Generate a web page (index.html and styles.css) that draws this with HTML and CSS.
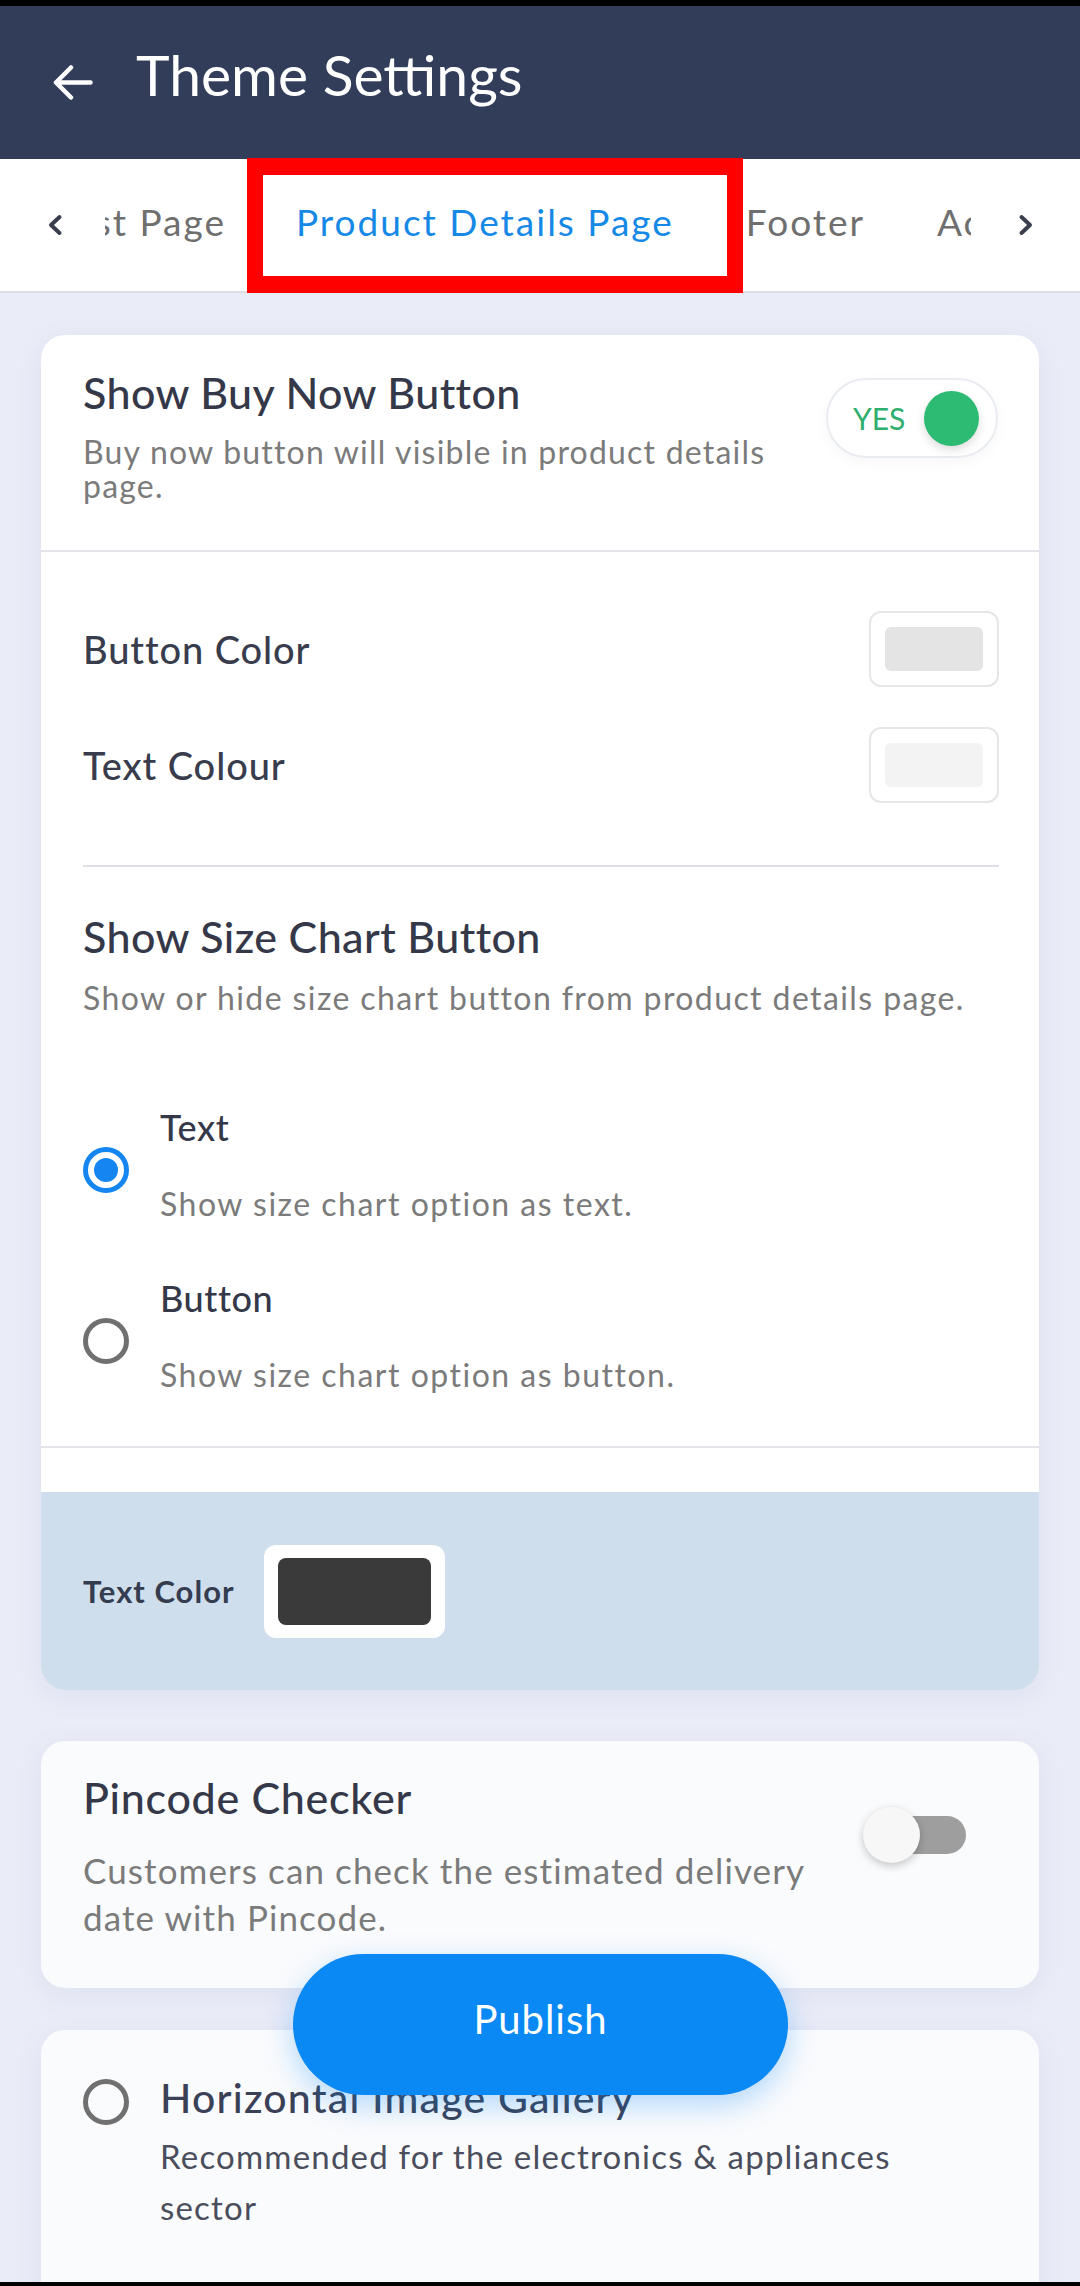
FILE: index.html
```html
<!DOCTYPE html>
<html lang="en">
<head>
  <meta charset="UTF-8">
  <title>Theme Settings</title>
  <meta name="viewport" content="width=device-width, initial-scale=1.0">
  <link rel="stylesheet" href="styles.css">
</head>
<body>
  <div class="screen">
    <header class="appbar">
      <svg class="back" viewBox="0 0 40 35" width="40" height="35">
        <path d="M37.5 17.5H3.5M18 2.5L3 17.5L18 32.5" fill="none" stroke="#fff" stroke-width="4.5" stroke-linecap="round" stroke-linejoin="round"/>
      </svg>
      <h1>Theme Settings</h1>
    </header>

    <nav class="tabs">
      <svg class="chev" viewBox="0 0 16 22" width="16" height="22">
        <path d="M12.5 3L4 11l8.5 8" fill="none" stroke="#3a3e4d" stroke-width="4" stroke-linecap="round" stroke-linejoin="round"/>
      </svg>
      <div class="tab-view">
        <div class="tab-track">
          <a class="tab tab-prev">Product List Page</a>
          <a class="tab active">Product Details Page</a>
          <a class="tab">Footer</a>
          <a class="tab">Account</a>
        </div>
      </div>
      <svg class="chev" viewBox="0 0 16 22" width="16" height="22">
        <path d="M3.5 3L12 11l-8.5 8" fill="none" stroke="#3a3e4d" stroke-width="4" stroke-linecap="round" stroke-linejoin="round"/>
      </svg>
      <div class="mark"></div>
    </nav>

    <main class="content">
      <section class="card card-main">
        <div class="setting setting-top">
          <div class="setting-text">
            <h2>Show Buy Now Button</h2>
            <p class="desc desc-buy">Buy now button will visible in product details page.</p>
          </div>
          <div class="switch-on"><span>YES</span><i></i></div>
        </div>

        <div class="options">
          <div class="color-row">
            <span>Button Color</span>
            <div class="swatch"><i class="sw-grey"></i></div>
          </div>
          <div class="color-row">
            <span>Text Colour</span>
            <div class="swatch"><i class="sw-light"></i></div>
          </div>
          <div class="rule"></div>

          <h2 class="size-title">Show Size Chart Button</h2>
          <p class="desc size-desc">Show or hide size chart button from product details page.</p>

          <label class="option first">
            <span class="radio checked"></span>
            <span class="option-text">
              <b>Text</b>
              <em>Show size chart option as text.</em>
            </span>
          </label>
          <label class="option">
            <span class="radio"></span>
            <span class="option-text">
              <b>Button</b>
              <em>Show size chart option as button.</em>
            </span>
          </label>
        </div>

        <div class="card-gap"></div>

        <div class="text-color">
          <span>Text Color</span>
          <div class="swatch-dark"><i></i></div>
        </div>
      </section>

      <section class="card card-soft card-pin">
        <div class="setting-text">
          <h2>Pincode Checker</h2>
          <p class="desc desc-pin">Customers can check the estimated delivery date with Pincode.</p>
        </div>
        <div class="switch-off"><span class="track"></span><span class="knob"></span></div>
      </section>

      <section class="card card-soft card-gallery">
        <span class="radio"></span>
        <div class="gallery-text">
          <h3>Horizontal Image Gallery</h3>
          <p>Recommended for the electronics &amp; appliances sector</p>
        </div>
      </section>
    </main>

    <button class="publish" type="button">Publish</button>
  </div>
</body>
</html>
```

FILE: styles.css
```css
*{box-sizing:border-box;margin:0;padding:0;}
body{background:#000;font-family:Lato,"Noto Sans",sans-serif;}
.screen{
  width:1080px;
  height:2286px;
  overflow:hidden;
  position:relative;
  border-top:6px solid #000;
  border-bottom:4px solid #000;
  background:#eaecf7;
}

/* app bar */
.appbar{
  height:153px;
  background:#323d59;
  display:flex;
  align-items:center;
  padding:0 0 18px 53px;
}
.back{margin-top:18px;flex:none;}
.appbar h1{
  margin-left:43px;
  font-size:57px;
  line-height:68px;
  font-weight:400;
  color:#fff;
}

/* tabs */
.tabs{
  position:relative;
  height:134px;
  background:#fff;
  border-bottom:2px solid #dcdee4;
  display:flex;
  align-items:center;
  padding:0 46px 8px 47px;
}
.chev{flex:none;margin-top:8px;}
.tab-view{
  flex:1;
  overflow:hidden;
  margin:0 47px 0 42px;
}
.tab-track{display:flex;}
.tab{
  flex:none;
  padding:0 36px;
  font-size:37px;
  line-height:41px;
  letter-spacing:2px;
  color:#6f6f6f;
  white-space:nowrap;
}
.tab-prev{
  width:155px;
  padding-right:34px;
  display:flex;
  justify-content:flex-end;
}
.tab.active{color:#1689e6;}
.mark{
  position:absolute;
  left:247px;
  top:-1px;
  width:496px;
  height:135px;
  border:16px solid #ff0000;
  border-width:17px 16px;
}

/* cards */
.content{padding:42px 41px 0;}
.card{
  background:#fff;
  border-radius:24px;
  overflow:hidden;
  box-shadow:0 6px 26px rgba(120,130,190,0.10);
}
.card-soft{background:#fafbfd;}
h2{
  font-size:43px;
  line-height:52px;
  font-weight:500;
  letter-spacing:0.4px;
  color:#343848;
}
.desc{
  font-size:32px;
  line-height:34px;
  letter-spacing:1.4px;
  color:#7b7b7b;
}
.setting-top{
  height:217px;
  display:flex;
  justify-content:space-between;
  align-items:flex-start;
  padding:32px 41px 0 42px;
  border-bottom:2px solid #e3e5ea;
}
.setting-text{flex:1;}
.desc-buy{margin-top:16px;max-width:720px;letter-spacing:1.2px;}

.switch-on{
  flex:none;
  margin-top:11px;
  width:172px;
  height:80px;
  display:flex;
  align-items:center;
  justify-content:space-between;
  padding:0 17px 0 25px;
  border:2px solid #e9ecf0;
  border-radius:40px;
  background:#fff;
  box-shadow:0 4px 14px rgba(0,0,0,0.04);
}
.switch-on span{font-size:30px;color:#2eae6d;}
.switch-on i{
  width:55px;
  height:55px;
  border-radius:50%;
  background:#2dbb73;
  box-shadow:0 4px 10px rgba(0,0,0,0.14);
}

.options{
  padding:39px 40px 53px 42px;
  border-bottom:2px solid #e3e5ea;
}
.color-row{
  height:116px;
  display:flex;
  align-items:center;
  justify-content:space-between;
}
.color-row span{
  font-size:38px;
  font-weight:500;
  letter-spacing:0.9px;
  color:#383c4c;
}
.swatch{
  width:130px;
  height:76px;
  border:2px solid #e6e6e6;
  border-radius:12px;
  padding:14px;
  display:flex;
}
.swatch i{flex:1;border-radius:6px;}
.sw-grey{background:#e4e4e4;}
.sw-light{background:#f3f3f3;}
.rule{height:2px;background:#dfe0e5;margin-top:42px;}
.size-title{margin-top:44px;}
.size-desc{margin-top:18px;}

.option{
  display:flex;
  align-items:flex-start;
  gap:31px;
  margin-top:54px;
}
.option.first{margin-top:90px;}
.option .radio{margin-top:42px;}
.radio{
  flex:none;
  width:46px;
  height:46px;
  border:5px solid #707070;
  border-radius:50%;
  display:flex;
  align-items:center;
  justify-content:center;
}
.radio.checked{border-color:#1586f1;}
.radio.checked::after{
  content:"";
  width:24px;
  height:24px;
  border-radius:50%;
  background:#1586f1;
}
.option-text{display:flex;flex-direction:column;}
.option-text b{
  font-size:36px;
  line-height:44px;
  font-weight:500;
  letter-spacing:0.6px;
  color:#343848;
}
.option-text em{
  font-style:normal;
  margin-top:37px;
  font-size:32px;
  line-height:36px;
  letter-spacing:1.5px;
  color:#7b7b7b;
}

.card-gap{height:44px;}
.text-color{
  height:198px;
  background:#cfdeec;
  display:flex;
  align-items:center;
  gap:29px;
  padding-left:42px;
}
.text-color span{
  font-size:31px;
  font-weight:700;
  letter-spacing:1px;
  color:#353c50;
}
.swatch-dark{
  width:181px;
  height:93px;
  background:#fff;
  border-radius:12px;
  padding:13px 14px;
  display:flex;
}
.swatch-dark i{flex:1;border-radius:8px;background:#3a3a3a;}

/* pincode */
.card-pin{
  margin-top:51px;
  display:flex;
  align-items:flex-start;
  padding:31px 73px 47px 42px;
}
.card-pin h2{letter-spacing:0.7px;}
.desc-pin{
  margin-top:23px;
  font-size:35px;
  line-height:47px;
  letter-spacing:1.1px;
  max-width:740px;
}
.switch-off{
  flex:none;
  position:relative;
  width:103px;
  height:56px;
  margin-top:35px;
}
.switch-off .track{
  position:absolute;
  right:0;
  top:9px;
  width:77px;
  height:38px;
  border-radius:19px;
  background:#9e9e9e;
}
.switch-off .knob{
  position:absolute;
  left:0;
  top:0;
  width:57px;
  height:56px;
  border-radius:50%;
  background:#f7f7f7;
  box-shadow:0 3px 8px rgba(0,0,0,0.22);
}

/* gallery */
.card-gallery{
  margin-top:42px;
  display:flex;
  align-items:flex-start;
  gap:31px;
  padding:45px 41px 80px 42px;
}
.card-gallery .radio{margin-top:4px;}
.gallery-text{max-width:780px;}
.gallery-text h3{
  font-size:41px;
  line-height:46px;
  font-weight:500;
  letter-spacing:1.2px;
  color:#3a4157;
}
.gallery-text p{
  margin-top:10px;
  font-size:33px;
  line-height:51px;
  letter-spacing:1.2px;
  color:#4a4e5c;
}

/* floating action */
.publish{
  position:absolute;
  left:293px;
  top:1948px;
  width:495px;
  height:141px;
  padding-bottom:12px;
  border:none;
  border-radius:71px;
  background:#0a88f4;
  color:#fff;
  font-family:Lato,"Noto Sans",sans-serif;
  font-size:40px;
  letter-spacing:1px;
  box-shadow:0 10px 30px rgba(10,136,244,0.30);
  cursor:pointer;
}
```
